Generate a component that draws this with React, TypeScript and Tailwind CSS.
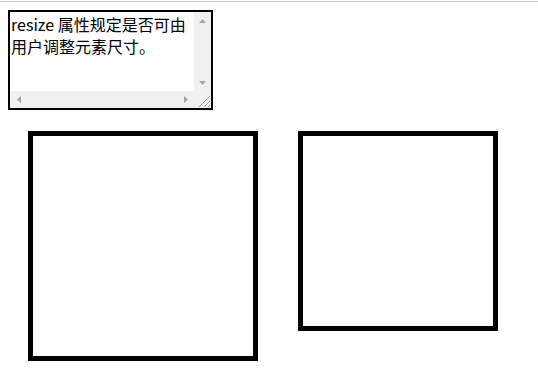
import { ReactNode } from 'react'

function Arrow({ dir }: { dir: 'up' | 'down' | 'left' | 'right' }) {
    const points = {
        up: '0,4 3.5,0 7,4',
        down: '0,0 3.5,4 7,0',
        left: '4,0 0,3.5 4,7',
        right: '0,0 4,3.5 0,7',
    }[dir]
    const vertical = dir === 'up' || dir === 'down'
    return (
        <svg width={vertical ? 7 : 4} height={vertical ? 4 : 7} viewBox={vertical ? '0 0 7 4' : '0 0 4 7'}>
            <polygon points={points} fill="#a3a3a3" />
        </svg>
    )
}

function ScrollButton({ children }: { children: ReactNode }) {
    return <div className="flex h-[17px] w-[17px] items-center justify-center">{children}</div>
}

function FakeTextarea() {
    return (
        <div className="ml-2 mt-2 grid h-[100px] w-[205px] grid-cols-[1fr_17px] grid-rows-[1fr_17px] border-2 border-black bg-white">
            <div className="overflow-hidden pl-px pt-px text-[16px] leading-[22px] text-black [font-family:'Microsoft_YaHei','Noto_Sans_CJK_SC',sans-serif]">
                resize 属性规定是否可由
                <br />
                用户调整元素尺寸。
            </div>
            <div className="flex flex-col justify-between bg-[#f0f0f0]">
                <ScrollButton>
                    <Arrow dir="up" />
                </ScrollButton>
                <ScrollButton>
                    <Arrow dir="down" />
                </ScrollButton>
            </div>
            <div className="flex justify-between bg-[#f0f0f0]">
                <ScrollButton>
                    <Arrow dir="left" />
                </ScrollButton>
                <ScrollButton>
                    <Arrow dir="right" />
                </ScrollButton>
            </div>
            <div className="bg-[#f0f0f0]">
                <svg width="17" height="17" viewBox="0 0 17 17">
                    <line x1="16" y1="5" x2="5" y2="16" stroke="#9a9a9a" strokeWidth="1" />
                    <line x1="16" y1="10" x2="10" y2="16" stroke="#9a9a9a" strokeWidth="1" />
                    <line x1="16" y1="14" x2="14" y2="16" stroke="#9a9a9a" strokeWidth="1" />
                </svg>
            </div>
        </div>
    )
}

export default function App() {
    return (
        <div className="min-h-[372px] w-[538px] bg-white">
            <div className="mt-px h-px w-full bg-[#c8c8c8]" />
            <FakeTextarea />
            <div className="flex items-start gap-[40px] pl-[28px] pt-[21px]">
                <div className="h-[230px] w-[230px] border-[5px] border-black" />
                <div className="h-[200px] w-[200px] border-[5px] border-black" />
            </div>
        </div>
    )
}
